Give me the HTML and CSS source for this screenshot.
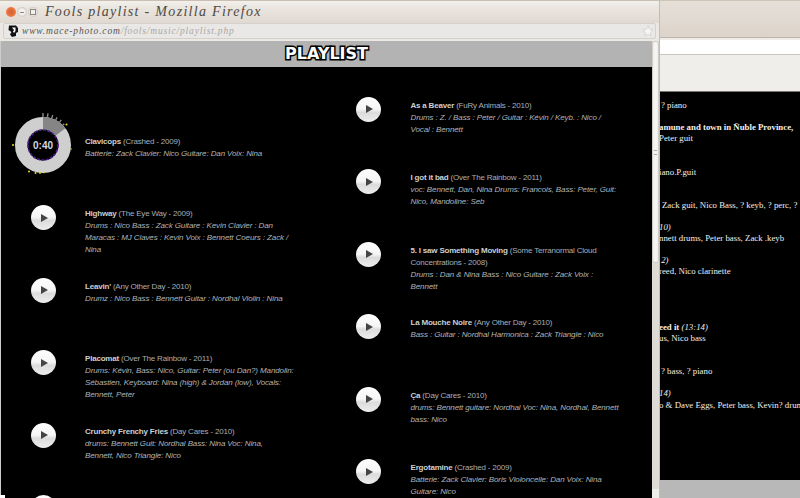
FILE: index.html
```html
<!DOCTYPE html>
<html lang="en">
<head>
<meta charset="utf-8">
<title>Fools playlist - Mozilla Firefox</title>
<link rel="stylesheet" href="styles.css">
</head>
<body>
<div class="desktop">
  <section class="back-window">
    <div class="back-title"></div>
    <div class="back-tabbar"></div>
    <div class="back-toolbar"></div>
    <div class="back-page">
      <p class="ln in2">? piano</p>
      <p class="ln"></p>
      <p class="ln in0"><b>amune and town in Ñuble Province,</b></p>
      <p class="ln in0">Peter guit</p>
      <p class="ln"></p>
      <p class="ln"></p>
      <p class="ln in0">iano.P.guit</p>
      <p class="ln"></p>
      <p class="ln"></p>
      <p class="ln in3">Zack guit, Nico Bass, ? keyb, ? perc, ?</p>
      <p class="ln"></p>
      <p class="ln in0"><i>10)</i></p>
      <p class="ln in0">nnett drums, Peter bass, Zack .keyb</p>
      <p class="ln"></p>
      <p class="ln in0"><i>&nbsp;2)</i></p>
      <p class="ln in0">reed, Nico clarinette</p>
      <p class="ln"></p>
      <p class="ln"></p>
      <p class="ln"></p>
      <p class="ln"></p>
      <p class="ln in0"><b>eed it</b> <i>(13:14)</i></p>
      <p class="ln in0">us, Nico bass</p>
      <p class="ln"></p>
      <p class="ln"></p>
      <p class="ln in2">? bass, ? piano</p>
      <p class="ln"></p>
      <p class="ln in0"><i>14)</i></p>
      <p class="ln in0">o &amp; Dave Eggs, Peter bass, Kevin? drum</p>
    </div>
    <div class="back-status"></div>
  </section>

  <section class="front-window">
    <header class="titlebar">
      <span class="wbtn wbtn-close"></span>
      <span class="wbtn wbtn-min"></span>
      <span class="wbtn wbtn-max"></span>
      <span class="wtitle">Fools playlist - Mozilla Firefox</span>
    </header>
    <div class="urlbar">
      <svg class="favicon" width="14" height="14" viewBox="0 0 14 14"><path d="M3 1.5h7l2 2.5v4l-2 1v3L6 13 4 10.5 5.5 8 2.5 6z" fill="#111"/><path d="M6 3.5h3.5v3.5L8 9 7 7.5 8 6z" fill="#fff"/></svg>
      <span class="url"><span class="domain">www.mace-photo.com</span>/fools/music/playlist.php</span>
      <svg class="star" width="12" height="12" viewBox="0 0 12 12"><path d="M6 .8l1.6 3.4 3.6.5-2.6 2.5.6 3.7L6 9.1l-3.2 1.8.6-3.7L.8 4.7l3.6-.5z" fill="#f6f5f3" stroke="#cfcdc9" stroke-width=".7"/></svg>
    </div>
    <div class="viewport">
      <main class="page">
        <h1 class="banner">PLAYLIST</h1>
        <div class="columns">
          <div class="col col-left">
            <article class="track">
              <div class="cell">
                <svg class="player" width="68" height="68" viewBox="-4 -4 68 68">
                  <circle cx="30" cy="30" r="21.75" fill="none" stroke="#cfcfcf" stroke-width="12.5"/>
                  <path d="M30 2A28 28 0 0 1 52.36 13.15L42.38 20.67A15.5 15.5 0 0 0 30 14.5Z" fill="#858585"/>
                  <circle cx="30" cy="30" r="15" fill="none" stroke="#4e1d8c" stroke-width="1.6" stroke-dasharray="3 1.4"/>
                  <g stroke="#8a8a8a" stroke-width="1.4">
                    <line x1="30" y1="2" x2="30" y2="-2"/>
                    <line x1="30" y1="2" x2="30" y2="-2" transform="rotate(9 30 30)"/>
                    <line x1="30" y1="2" x2="30" y2="-1.5" transform="rotate(18 30 30)"/>
                    <line x1="30" y1="2" x2="30" y2="-1" transform="rotate(27 30 30)"/>
                    <line x1="30" y1="2" x2="30" y2="-1" transform="rotate(36 30 30)"/>
                    <line x1="30" y1="2" x2="30" y2="0" transform="rotate(45 30 30)"/>
                  </g>
                  <g fill="#e6e01e">
                    <circle cx="53.5" cy="9.5" r="1"/>
                    <circle cx="0" cy="30" r="1"/>
                    <circle cx="16" cy="56.5" r="1"/>
                    <circle cx="22.5" cy="58" r="1"/>
                    <circle cx="27" cy="58" r=".9"/>
                    <circle cx="31" cy="57.5" r=".8"/>
                    <circle cx="58" cy="34" r=".8"/>
                  </g>
                  <text class="time" x="30" y="33.5" text-anchor="middle">0:40</text>
                </svg>
              </div>
              <div class="info"><p class="head"><b>Clavicops</b> (Crashed - 2009)</p><p class="credit">Batterie: Zack Clavier: Nico Guitare: Dan Voix: Nina</p></div>
            </article>
            <article class="track">
              <div class="cell"><span class="play"><svg width="7" height="8" viewBox="0 0 7 8"><path d="M0 0l7 4-7 4z"/></svg></span></div>
              <div class="info"><p class="head"><b>Highway</b> (The Eye Way - 2009)</p><p class="credit">Drums : Nico Bass : Zack Guitare : Kevin Clavier : Dan<br>Maracas : MJ Claves : Kevin Voix : Bennett Coeurs : Zack /<br>Nina</p></div>
            </article>
            <article class="track">
              <div class="cell"><span class="play"><svg width="7" height="8" viewBox="0 0 7 8"><path d="M0 0l7 4-7 4z"/></svg></span></div>
              <div class="info"><p class="head"><b>Leavin'</b> (Any Other Day - 2010)</p><p class="credit">Drumz : Nico Bass : Bennett Guitar : Nordhal Violin : Nina</p></div>
            </article>
            <article class="track">
              <div class="cell"><span class="play"><svg width="7" height="8" viewBox="0 0 7 8"><path d="M0 0l7 4-7 4z"/></svg></span></div>
              <div class="info"><p class="head"><b>Placomat</b> (Over The Rainbow - 2011)</p><p class="credit">Drums: Kévin, Bass: Nico, Guitar: Peter (ou Dan?) Mandolin:<br>Sébastien, Keyboard: Nina (high) &amp; Jordan (low), Vocals:<br>Bennett, Peter</p></div>
            </article>
            <article class="track">
              <div class="cell"><span class="play"><svg width="7" height="8" viewBox="0 0 7 8"><path d="M0 0l7 4-7 4z"/></svg></span></div>
              <div class="info"><p class="head"><b>Crunchy Frenchy Fries</b> (Day Cares - 2010)</p><p class="credit">drums: Bennett Guit: Nordhal Bass: Nina Voc: Nina,<br>Bennett, Nico Triangle: Nico</p></div>
            </article>
            <article class="track">
              <div class="cell"><span class="play"></span></div>
            </article>
          </div>
          <div class="col col-right">
            <article class="track">
              <div class="cell"><span class="play"><svg width="7" height="8" viewBox="0 0 7 8"><path d="M0 0l7 4-7 4z"/></svg></span></div>
              <div class="info"><p class="head"><b>As a Beaver</b> (FuRy Animals - 2010)</p><p class="credit">Drums : Z. / Bass : Peter / Guitar : Kévin / Keyb. : Nico /<br>Vocal : Bennett</p></div>
            </article>
            <article class="track">
              <div class="cell"><span class="play"><svg width="7" height="8" viewBox="0 0 7 8"><path d="M0 0l7 4-7 4z"/></svg></span></div>
              <div class="info"><p class="head"><b>I got it bad</b> (Over The Rainbow - 2011)</p><p class="credit">voc: Bennett, Dan, Nina Drums: Francois, Bass: Peter, Guit:<br>Nico, Mandoline: Seb</p></div>
            </article>
            <article class="track">
              <div class="cell"><span class="play"><svg width="7" height="8" viewBox="0 0 7 8"><path d="M0 0l7 4-7 4z"/></svg></span></div>
              <div class="info"><p class="head"><b>5. I saw Something Moving</b> (Some Terranormal Cloud<br>Concentrations - 2008)</p><p class="credit">Drums : Dan &amp; Nina Bass : Nico Guitare : Zack Voix :<br>Bennett</p></div>
            </article>
            <article class="track">
              <div class="cell"><span class="play"><svg width="7" height="8" viewBox="0 0 7 8"><path d="M0 0l7 4-7 4z"/></svg></span></div>
              <div class="info"><p class="head"><b>La Mouche Noire</b> (Any Other Day - 2010)</p><p class="credit">Bass : Guitar : Nordhal Harmonica : Zack Triangle : Nico</p></div>
            </article>
            <article class="track">
              <div class="cell"><span class="play"><svg width="7" height="8" viewBox="0 0 7 8"><path d="M0 0l7 4-7 4z"/></svg></span></div>
              <div class="info"><p class="head"><b>Ça</b> (Day Cares - 2010)</p><p class="credit">drums: Bennett guitare: Nordhal Voc: Nina, Nordhal, Bennett<br>bass: Nico</p></div>
            </article>
            <article class="track">
              <div class="cell"><span class="play"><svg width="7" height="8" viewBox="0 0 7 8"><path d="M0 0l7 4-7 4z"/></svg></span></div>
              <div class="info"><p class="head"><b>Ergotamine</b> (Crashed - 2009)</p><p class="credit">Batterie: Zack Clavier: Boris Violoncelle: Dan Voix: Nina<br>Guitare: Nico</p></div>
            </article>
          </div>
        </div>
      </main>
      <div class="scrollbar">
        <div class="thumb"><span class="grip"></span></div>
        <div class="scroll-end"></div>
      </div>
    </div>
    <span class="corner"></span>
  </section>
</div>
</body>
</html>
```

FILE: styles.css
```css
* { box-sizing: border-box; margin: 0; padding: 0; }
html, body { width: 800px; height: 498px; overflow: hidden; background: #000; }
.desktop { position: relative; width: 800px; height: 498px; overflow: hidden; }

/* back window */
.back-window {
  position: absolute; left: 0; top: 0; width: 800px; height: 498px;
  display: flex; flex-direction: column;
  background: #b8b8b8;
}
.back-title {
  height: 38px;
  background: linear-gradient(#e6dfd8 0, #e3dcd4 12px, #dcd3ca 100%);
  border-top: 1px solid #cfc4b8;
  border-bottom: 1px solid #bdb5ab;
}
.back-tabbar { height: 17px; background: #fff; border-top: 2px solid #efece8; border-bottom: 1px solid #c8c5bf; }
.back-toolbar { height: 37px; background: #f0eeeb; border-bottom: 1px solid #77756f; }
.back-page {
  height: 388px; background: #000; color: #f0f0f0; padding-top: 8px;
  font: 8.8px/11.1px "Liberation Serif", serif;
}
.ln { height: 11.1px; white-space: nowrap; overflow: hidden; padding-left: 659px; }
.in0 { padding-left: 659px; }
.in2 { padding-left: 661px; }
.in3 { padding-left: 662px; }
.back-status { flex: 1; background: #b8b8b8; }

/* front window */
.front-window {
  position: absolute; left: 0; top: 0; width: 659px; height: 498px;
  display: flex; flex-direction: column; overflow: hidden;
  background: #ece9e5; box-shadow: 1px 0 0 #c5bbb0;
}
.titlebar {
  height: 23px; display: flex; align-items: center; padding-left: 6px;
  background: linear-gradient(#f3f0ec 0, #ebe6e0 6px, #e0d9d1 100%);
  border-top: 1px solid #cabfb3;
}
.wbtn {
  width: 10px; height: 10px; border-radius: 50%; margin-right: 1px; flex: none;
  display: flex; align-items: center; justify-content: center;
}
.wbtn-close { background: radial-gradient(circle at 50% 50%, #d9673a 25%, #ef7a42 65%, #e8a58a 100%); }
.wbtn-min { background: radial-gradient(circle, #f2efec 40%, #a8a29a 100%); }
.wbtn-min::after { content: ""; width: 4px; height: 1px; background: #8d8880; }
.wbtn-max { background: radial-gradient(circle, #f2efec 40%, #a8a29a 100%); }
.wbtn-max::after { content: ""; width: 4px; height: 4px; border: 1px solid #8d8880; }
.wtitle {
  margin-left: 6px; color: #4f4a43; white-space: nowrap;
  font: italic 14px "Liberation Serif", serif; letter-spacing: 1.3px;
}
.urlbar {
  height: 16px; margin: 0 3px; display: flex; align-items: center;
  background: #e9e8e6; border: 1px solid #d4d1cc; border-radius: 2px;
}
.favicon { flex: none; margin: 0 1px 0 2px; }
.url {
  flex: 1; margin-left: 1px; color: #a9a7a4; white-space: nowrap;
  font: italic 9.5px "Liberation Serif", serif; letter-spacing: .83px;
}
.domain { color: #55534f; }
.star { flex: none; margin-right: 1px; }
.viewport { flex: 1; min-height: 0; display: flex; margin-top: 1px; padding-left: 1px; background: #cfcdc9; border-top: 1px solid #ece9e5; }
.page { width: 651px; flex: none; background: #000; overflow: hidden; display: flex; flex-direction: column; }
.banner {
  height: 26px; background: #b3b3b3; text-align: center; color: #fff;
  font: 900 16px/25px "DejaVu Sans", sans-serif;
  -webkit-text-stroke: 3px #000; paint-order: stroke fill;
}
.columns { display: flex; flex: 1; min-height: 0; }
.col { width: 325.5px; flex: none; }
.col-left { padding-top: 65.5px; }
.col-right { padding-top: 29.5px; }
.track { height: 72.6px; display: flex; align-items: flex-start; }
.cell { width: 84px; height: 25px; flex: none; display: flex; align-items: center; justify-content: center; }
.player { flex: none; overflow: visible; margin: -21.5px; }
.time { font: bold 10px "Liberation Sans", sans-serif; fill: #d3d9e2; }
.play {
  width: 25px; height: 25px; border-radius: 50%; flex: none;
  display: flex; align-items: center; justify-content: center;
  background: linear-gradient(#fdfdfd 0, #f6f6f6 48%, #dcdcdc 62%, #ededed 100%);
}
.play svg { fill: #444; margin-left: 2px; }
.info { flex: 1; margin-top: 3px; white-space: nowrap; font: 8px/12px "Liberation Sans", sans-serif; }
.head { color: #a9aeb4; letter-spacing: -.2px; }
.head b { color: #cfcfcf; font-weight: bold; }
.credit { color: #b0b4b8; font-style: italic; letter-spacing: -.11px; }

/* scrollbar */
.scrollbar { flex: 1; display: flex; flex-direction: column; background: #dedbd7; }
.thumb {
  height: 222px; background: linear-gradient(90deg, #efedea, #f8f7f5 60%, #e6e3df);
  border-radius: 3px; display: flex; align-items: center; justify-content: center;
  box-shadow: 0 0 0 1px #d0cdc8 inset;
}
.grip { width: 3px; height: 5px; border-top: 1px solid #aaa; border-bottom: 1px solid #aaa; }
.scroll-end { margin-top: auto; height: 9px; background: #efedea; }
.corner { position: absolute; left: 0; bottom: 0; width: 5px; height: 3px; background: #fff; }
```
